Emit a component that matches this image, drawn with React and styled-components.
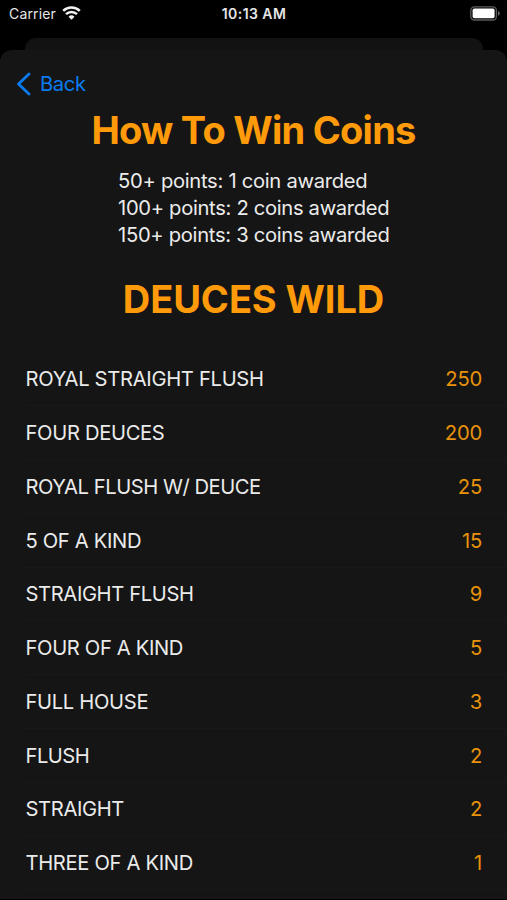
import React from 'react';
import styled, { createGlobalStyle } from 'styled-components';

const GlobalStyle = createGlobalStyle`
  * {
    box-sizing: border-box;
  }

  body {
    margin: 0;
    background-color: #000000;
    font-family: Inter, 'Liberation Sans', sans-serif;
  }
`;

const Screen = styled.div`
  display: flex;
  flex-direction: column;
  width: 507px;
  height: 900px;
  overflow: hidden;
  background-color: #000000;
`;

const StatusBar = styled.div`
  display: grid;
  grid-template-columns: 1fr auto 1fr;
  align-items: center;
  height: 38px;
  flex-shrink: 0;
  padding: 0 7px 10px 9px;
  color: #e6e6e6;
  font-size: 14px;
  line-height: 18px;
`;

const Carrier = styled.div`
  display: flex;
  align-items: center;
  gap: 6px;
  letter-spacing: 0.15px;

  svg {
    margin-bottom: 2px;
  }
`;

const Clock = styled.div`
  margin-right: 1px;
  font-weight: 600;
  letter-spacing: 0.45px;
`;

const BatterySlot = styled.div`
  display: flex;
  justify-content: flex-end;
  padding-bottom: 1px;
`;

const BackSheet = styled.div`
  height: 12px;
  flex-shrink: 0;
  margin: 0 24px 0 25px;
  border-radius: 11px 11px 0 0;
  background-color: #121212;
`;

const Sheet = styled.main`
  display: flex;
  flex-direction: column;
  height: 849px;
  flex-shrink: 0;
  border-radius: 12px 12px 0 0;
  background-color: #151515;
`;

const BackButton = styled.button`
  display: flex;
  align-items: center;
  align-self: flex-start;
  gap: 9px;
  margin: 21px 0 0 16px;
  padding: 0;
  border: none;
  background: none;
  color: #0a7cf0;
  font-family: inherit;
  font-size: 20.2px;
  line-height: 26px;
  letter-spacing: -0.35px;
`;

const Title = styled.h1`
  margin: ${props => props.$top}px 0 0;
  color: #ff9b0a;
  font-size: 38px;
  font-weight: 700;
  line-height: 46px;
  letter-spacing: ${props => props.$tracking}px;
  text-align: center;
`;

const Rules = styled.div`
  margin: 14px 0 0 118px;
  color: #ebebeb;
  font-size: 20.2px;
  line-height: 27px;
`;

const Rule = styled.div`
  letter-spacing: ${props => props.$tracking}px;
`;

const PayTable = styled.ul`
  margin: 30.5px 0 0;
  padding: 0 0 0 25.5px;
  list-style: none;
`;

const PayRow = styled.li`
  display: flex;
  align-items: center;
  justify-content: space-between;
  height: 53.75px;
  padding-right: 25px;
  border-bottom: 1px solid #191919;
  font-size: 20.2px;
`;

const Hand = styled.span`
  color: #ebebeb;
  letter-spacing: ${props => props.$tracking}px;
`;

const Payout = styled.span`
  color: #e8920c;
  letter-spacing: -0.2px;
`;

const rules = [
  { text: '50+ points: 1 coin awarded', tracking: -0.29 },
  { text: '100+ points: 2 coins awarded', tracking: -0.32 },
  { text: '150+ points: 3 coins awarded', tracking: -0.3 }
];

const hands = [
  { name: 'ROYAL STRAIGHT FLUSH', payout: 250, tracking: -0.31 },
  { name: 'FOUR DEUCES', payout: 200, tracking: -0.33 },
  { name: 'ROYAL FLUSH W/ DEUCE', payout: 25, tracking: -0.46 },
  { name: '5 OF A KIND', payout: 15, tracking: -0.34 },
  { name: 'STRAIGHT FLUSH', payout: 9, tracking: -0.38 },
  { name: 'FOUR OF A KIND', payout: 5, tracking: -0.35 },
  { name: 'FULL HOUSE', payout: 3, tracking: -0.33 },
  { name: 'FLUSH', payout: 2, tracking: -0.5 },
  { name: 'STRAIGHT', payout: 2, tracking: -0.36 },
  { name: 'THREE OF A KIND', payout: 1, tracking: -0.33 }
];

function WifiIcon() {
  return (
    <svg width="19" height="14" viewBox="0 0 19 14" fill="none" stroke="#f2f2f2" strokeWidth="2.5">
      <path d="M1.2 4.9a11.9 11.9 0 0 1 16.6 0" />
      <path d="M4 8.2a7.9 7.9 0 0 1 11 0" />
      <path d="M9.5 13.8 6.5 10.8a4.3 4.3 0 0 1 6 0Z" fill="#f2f2f2" stroke="none" />
    </svg>
  );
}

function BatteryIcon() {
  return (
    <svg width="30" height="15" viewBox="0 0 30 15">
      <rect x="0.8" y="0.8" width="25.6" height="13.2" rx="3.6" fill="none" stroke="#5c5c5c" strokeWidth="1.3" />
      <rect x="2.6" y="2.6" width="22" height="9.6" rx="1.6" fill="#ffffff" />
      <path d="M28 5.2c1.2.4 1.8 1.2 1.8 2.2s-.6 1.8-1.8 2.2Z" fill="#666666" />
    </svg>
  );
}

function BackChevron() {
  return (
    <svg width="15" height="24" viewBox="0 0 15 24" fill="none" stroke="currentColor" strokeWidth="2.8" strokeLinecap="round" strokeLinejoin="round">
      <path d="M13 2 2.5 12 13 22" />
    </svg>
  );
}

function App() {
  return (
    <>
      <GlobalStyle />
      <Screen>
        <StatusBar>
          <Carrier>
            Carrier
            <WifiIcon />
          </Carrier>
          <Clock>10:13 AM</Clock>
          <BatterySlot>
            <BatteryIcon />
          </BatterySlot>
        </StatusBar>
        <BackSheet />
        <Sheet>
          <BackButton>
            <BackChevron />
            Back
          </BackButton>
          <Title $top={10} $tracking={-0.75}>How To Win Coins</Title>
          <Rules>
            {rules.map(rule => (
              <Rule key={rule.text} $tracking={rule.tracking}>{rule.text}</Rule>
            ))}
          </Rules>
          <Title $top={28} $tracking={-0.1}>DEUCES WILD</Title>
          <PayTable>
            {hands.map(hand => (
              <PayRow key={hand.name}>
                <Hand $tracking={hand.tracking}>{hand.name}</Hand>
                <Payout>{hand.payout}</Payout>
              </PayRow>
            ))}
          </PayTable>
        </Sheet>
      </Screen>
    </>
  );
}

export default App;
